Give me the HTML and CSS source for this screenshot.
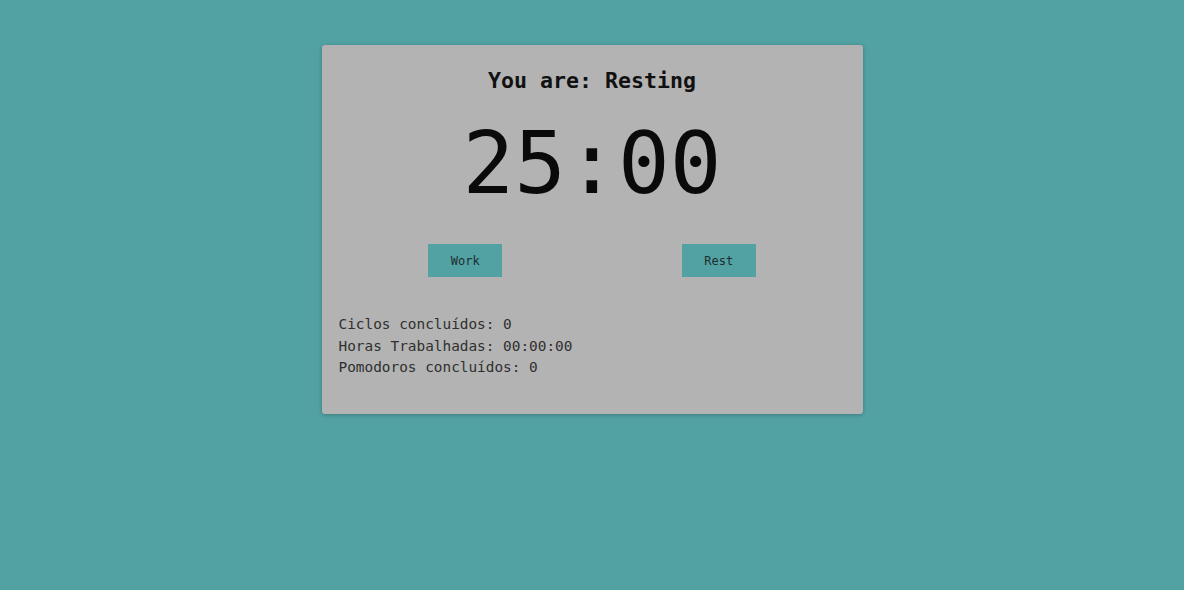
FILE: index.html
```html
<!DOCTYPE html>
<html lang="pt">
<head>
<meta charset="utf-8">
<title>Pomodoro</title>
<link rel="stylesheet" href="styles.css">
</head>
<body>
<main class="card">
  <h1 class="status">You are: Resting</h1>
  <div class="timer">25:00</div>
  <div class="actions">
    <button class="btn">Work</button>
    <button class="btn">Rest</button>
  </div>
  <div class="stats">
    <p>Ciclos concluídos: 0</p>
    <p>Horas Trabalhadas: 00:00:00</p>
    <p>Pomodoros concluídos: 0</p>
  </div>
</main>
</body>
</html>
```

FILE: styles.css
```css
html, body {
  margin: 0;
  padding: 0;
}
body {
  background: #52a2a4;
  font-family: "DejaVu Sans Mono", "Liberation Mono", monospace;
  color: #111;
  min-height: 590px;
  padding-top: 45px;
  box-sizing: border-box;
}
.card {
  width: 541px;
  height: 369px;
  box-sizing: border-box;
  margin: 0 auto;
  background: #b3b3b3;
  border-radius: 3px;
  box-shadow: 0 1px 4px rgba(0, 0, 0, 0.25);
  padding: 17px;
  display: flex;
  flex-direction: column;
}
.status {
  margin: 5px 0 0;
  font-size: 21.6px;
  line-height: 28px;
  font-weight: bold;
  text-align: center;
}
.timer {
  margin-top: 18px;
  font-size: 86px;
  line-height: 100px;
  text-align: center;
  color: #0a0a0a;
}
.actions {
  margin-top: 31px;
  display: flex;
  justify-content: space-around;
}
.btn {
  width: 74px;
  height: 33px;
  border: none;
  background: #52a2a4;
  color: #1c2e2e;
  font-family: "DejaVu Sans Mono", "Liberation Mono", monospace;
  font-size: 12px;
  padding: 0;
}
.stats {
  margin-top: 37px;
  color: #2f2f2f;
  font-size: 14.4px;
  line-height: 21.5px;
}
.stats p {
  margin: 0;
}
```
